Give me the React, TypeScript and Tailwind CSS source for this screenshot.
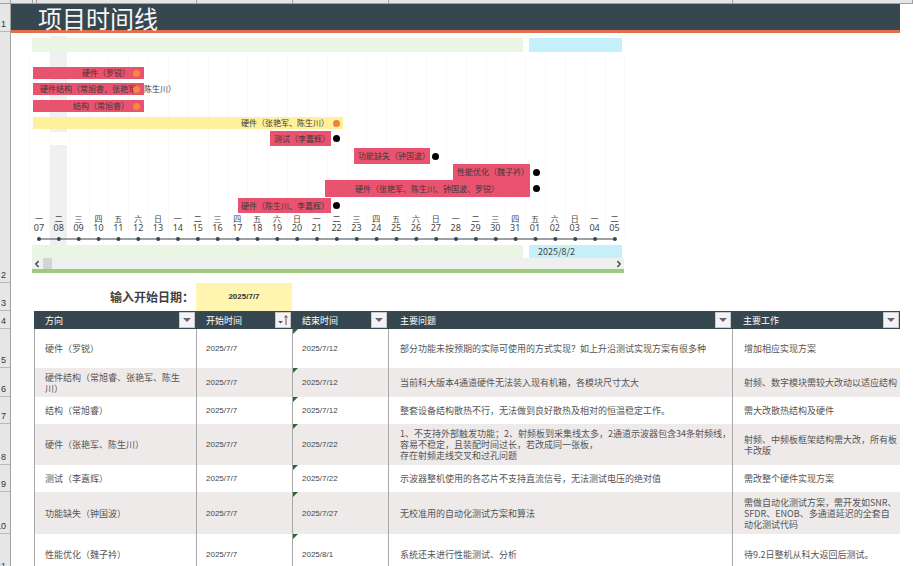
import { ChevronLeft, ChevronRight } from 'lucide-react'

const days = ['07', '08', '09', '10', '11', '12', '13', '14', '15', '16', '17', '18', '19', '20', '21', '22', '23', '24', '25', '26', '27', '28', '29', '30', '31', '01', '02', '03', '04', '05']
const weekdays = ['一', '二', '三', '四', '五', '六', '日']

const gutterRows = [
  { label: '1', cls: 'h-[28px]' },
  { label: '2', cls: 'h-[251px]' },
  { label: '3', cls: 'h-[28px]' },
  { label: '4', cls: 'h-[18px]' },
  { label: '5', cls: 'h-[39px]' },
  { label: '6', cls: 'h-[29px]' },
  { label: '7', cls: 'h-[27px]' },
  { label: '8', cls: 'h-[41px]' },
  { label: '9', cls: 'h-[27px]' },
  { label: '10', cls: 'h-[42px]' },
  { label: '11', cls: 'h-[40px]' },
]

const topTicks = ['w-[11px]', 'w-[22px]', 'w-[4px]', 'w-[160px]', 'w-[96px]', 'w-[96px]', 'w-[344px]', 'w-[180px]']

const bars = [
  { text: '硬件（罗锐）', row: 'mt-[15px] h-[12px] ml-[22px]', bar: 'w-[111px] bg-[#e9536f] justify-end pr-[14px]', dot: 'bg-[#f58a3c] ml-[-11px]' },
  { text: '硬件结构（常旭睿、张艳军、陈生川）', row: 'mt-[4px] h-[12px] ml-[22px]', bar: 'w-[111px] bg-[#e9536f] pl-[7px]', dot: 'bg-[#f58a3c] ml-[-11px]' },
  { text: '结构（常旭睿）', row: 'mt-[5px] h-[12px] ml-[22px]', bar: 'w-[111px] bg-[#e9536f] justify-end pr-[15px]', dot: 'bg-[#f58a3c] ml-[-11px]' },
  { text: '硬件（张艳军、陈生川）', row: 'mt-[5px] h-[12px] ml-[22px]', bar: 'w-[310px] bg-[#fff19b] justify-end pr-[14px]', dot: 'bg-[#f0803c] ml-[-10px]' },
  { text: '测试（李嘉辉）', row: 'mt-[2px] h-[15px] ml-[259px]', bar: 'w-[61px] bg-[#e9536f] justify-end pr-[1px]', dot: 'bg-black ml-[2px]' },
  { text: '功能缺失（钟国波）', row: 'mt-[2px] h-[16px] ml-[343px]', bar: 'w-[76px] bg-[#e9536f] justify-end pr-0', dot: 'bg-black ml-[2px]' },
  { text: '性能优化（魏子衿）', row: 'h-[16px] ml-[442px]', bar: 'w-[77px] bg-[#e9536f] justify-end pr-[1px]', dot: 'bg-black ml-[3px]' },
  { text: '硬件（张艳军、陈生川、钟国波、罗锐）', row: 'h-[17px] ml-[314px]', bar: 'w-[205px] bg-[#e9536f] justify-end pr-[31px]', dot: 'bg-black ml-[3px]' },
  { text: '硬件（陈生川、李嘉辉）', row: 'mt-[1px] h-[15px] ml-[227px]', bar: 'w-[93px] bg-[#e9536f] justify-end pr-[2px]', dot: 'bg-black ml-[2px]' },
]

const headers = [
  { text: '方向', pad: 'pl-[11px]' },
  { text: '开始时间', pad: 'pl-[10px]', sorted: true },
  { text: '结束时间', pad: 'pl-[10px]' },
  { text: '主要问题', pad: 'pl-[12px]' },
  { text: '主要工作', pad: 'pl-[11px]' },
]

const rows = [
  { h: 'h-[39px]', dir: '硬件（罗锐）', end: '2025/7/12', issue: '部分功能未按预期的实际可使用的方式实现？如上升沿测试实现方案有很多种', work: '增加相应实现方案' },
  { h: 'h-[29px] bg-[#eeeaea]', dir: '硬件结构（常旭睿、张艳军、陈生\n川）', end: '2025/7/12', issue: '当前科大版本4通道硬件无法装入现有机箱，各模块尺寸太大', work: '射频、数字模块需较大改动以适应结构' },
  { h: 'h-[27px]', dir: '结构（常旭睿）', end: '2025/7/12', issue: '整套设备结构散热不行，无法做到良好散热及相对的恒温稳定工作。', work: '需大改散热结构及硬件' },
  { h: 'h-[41px] bg-[#eeeaea]', dir: '硬件（张艳军、陈生川）', end: '2025/7/22', issue: '1、不支持外部触发功能；2、射频板到采集线太多，2通道示波器包含34条射频线，\n容易不稳定，且装配时间过长，若改成同一张板，\n存在射频走线交叉和过孔问题', work: '射频、中频板框架结构需大改，所有板\n卡改版' },
  { h: 'h-[27px]', dir: '测试（李嘉辉）', end: '2025/7/22', issue: '示波器整机使用的各芯片不支持直流信号，无法测试电压的绝对值', work: '需改整个硬件实现方案' },
  { h: 'h-[42px] bg-[#eeeaea]', dir: '功能缺失（钟国波）', end: '2025/7/27', issue: '无校准用的自动化测试方案和算法', work: '需做自动化测试方案，需开发如SNR、\nSFDR、ENOB、多通道延迟的全套自\n动化测试代码' },
  { h: 'h-[40px]', dir: '性能优化（魏子衿）', end: '2025/8/1', issue: '系统还未进行性能测试、分析', work: '待9.2日整机从科大返回后测试。' },
]

function FilterButton({ sorted }: { sorted?: boolean }) {
  return (
    <div className="w-[16px] h-[16px] bg-[#f3f3f7] border border-[#c8c8c8] flex items-center justify-center shrink-0">
      <svg width="12" height="12" viewBox="0 0 12 12">
        {sorted ? (
          <>
            <path d="M1 7h5l-2.5 2.5z" fill="#555" />
            <path d="M9 11V2M7.5 3.5L9 1.5l1.5 2" stroke="#555" strokeWidth="1" fill="none" />
          </>
        ) : (
          <path d="M2 4h8L6 8z" fill="#666" />
        )}
      </svg>
    </div>
  )
}

function Timeline() {
  return (
    <div className="relative w-[625px]">
      <div className="absolute left-[39px] top-[3px] w-[17px] h-[96px] bg-[#f0f0f0]" />
      <div className="absolute left-[39px] top-[112px] w-[17px] h-[100px] bg-[#f0f0f0]" />
      <div className="absolute left-[18px] top-[24px] w-[596px] h-[180px] bg-[repeating-linear-gradient(90deg,#f8f8f8_0,#f8f8f8_1px,transparent_1px,transparent_19.85px)]" />

      <div className="relative flex pt-[5px] ml-[21px]">
        <div className="w-[491px] h-[14px] bg-[#ebf5e3]" />
        <div className="w-[93px] h-[14px] ml-[6px] bg-[#c5f0fa]" />
      </div>

      {bars.map((b) => (
        <div key={b.text} className={`relative flex items-center ${b.row}`}>
          <div className={`h-full flex items-center whitespace-nowrap text-[8px] text-[#3a3a3a] ${b.bar}`}>{b.text}</div>
          <div className={`relative w-[7px] h-[7px] rounded-full shrink-0 ${b.dot}`} />
        </div>
      ))}

      <div className="relative flex ml-[18px] mt-[1px] text-[#444] text-center">
        {days.map((d, i) => (
          <div key={i} className="w-[19.85px] shrink-0">
            <div className="text-[8px] leading-[9px]">{weekdays[i % 7]}</div>
            <div className="text-[9px] leading-[9px] font-['Noto_Sans','Noto_Sans_CJK_SC',sans-serif]">{d}</div>
          </div>
        ))}
      </div>

      <svg className="relative block ml-[18px] mt-[4px]" width="600" height="6" viewBox="0 0 600 6">
        <line x1="10" y1="3" x2="586" y2="3" stroke="#37474f" strokeWidth="1" />
        {days.map((d, i) => (
          <circle key={i} cx={10 + i * 19.86} cy="3" r="2" fill="#37474f" />
        ))}
      </svg>

      <div className="relative flex mt-[3px] ml-[21px]">
        <div className="w-[491px] h-[13px] bg-[#ebf5e3]" />
        <div className="w-[93px] h-[13px] ml-[6px] bg-[#c5f0fa] text-[9px] text-[#444] flex items-center pl-[9px]">2025/8/2</div>
      </div>

      <div className="relative ml-[21px] w-[592px] h-[11px] bg-[#f0f0f0] flex items-center justify-between">
        <div className="flex items-center">
          <ChevronLeft size={10} strokeWidth={3.5} className="text-[#444]" />
          <div className="w-[9px] h-[11px] bg-[#d4d4d4] ml-[1px]" />
        </div>
        <ChevronRight size={10} strokeWidth={3.5} className="text-[#444]" />
      </div>
      <div className="ml-[21px] w-[592px] h-[4px] bg-[#9ccb7b]" />
    </div>
  )
}

export default function App() {
  return (
    <div className="w-[913px] h-[566px] overflow-hidden bg-white font-['Noto_Sans_CJK_SC','Liberation_Sans',sans-serif]">
      <div className="flex h-[4px] bg-[#e6e6e6] border-b border-[#a0a0a0]">
        {topTicks.map((w, i) => (
          <div key={i} className={`${w} border-r border-[#a0a0a0]`} />
        ))}
      </div>

      <div className="flex">
        <div className="w-[11px] shrink-0 bg-[#e6e6e6] border-r border-[#a0a0a0] overflow-hidden">
          {gutterRows.map((r) => (
            <div key={r.label} className={`${r.cls} flex items-end justify-end pr-[4px] pb-[2px] border-b border-[#b8b8b8] text-[9px] leading-[10px] text-[#333] font-['Liberation_Sans',sans-serif]`}>
              {r.label}
            </div>
          ))}
        </div>

        <div className="flex-1 min-w-0">
          <div className="w-[889px] h-[29px] bg-[#37474f] border-b-[3px] border-[#e0704a] pl-[27px] pt-[2px] text-[24px] leading-[24px] text-[#f5f5f5]">
            项目时间线
          </div>

          <Timeline />

          <div className="flex items-center h-[28px] mt-[10px]">
            <div className="w-[183px] mr-[2px] text-right text-[12px] font-bold text-[#404040]">输入开始日期：</div>
            <div className="w-[96px] h-full bg-[#fff5b0] flex items-center justify-center text-[8px] font-bold text-[#333] font-['Liberation_Sans',sans-serif]">2025/7/7</div>
          </div>

          <div className="ml-[23px] w-[866px] text-[9px] leading-[11px] text-[#555]">
            <div className="grid grid-cols-[162px_96px_96px_344px_168px] h-[18px] bg-[#37474f] text-white">
              {headers.map((h) => (
                <div key={h.text} className={`flex items-center justify-between pr-[1px] ${h.pad}`}>
                  <span>{h.text}</span>
                  <FilterButton sorted={h.sorted} />
                </div>
              ))}
            </div>

            {rows.map((r) => (
              <div key={r.dir} className={`grid grid-cols-[162px_96px_96px_344px_168px] items-stretch border-l border-[#a8a8a8] ${r.h}`}>
                <div className="flex items-center pl-[10px] pr-[6px] whitespace-pre-line border-r border-[#a8a8a8]">{r.dir}</div>
                <div className="flex items-center pl-[9px] text-[8px] text-[#444] border-r border-[#a8a8a8] font-['Liberation_Sans',sans-serif]">2025/7/7</div>
                <div className="relative flex items-center pl-[9px] text-[8px] text-[#444] border-r border-[#a8a8a8] font-['Liberation_Sans',sans-serif]">
                  <div className="absolute left-0 top-0 w-0 h-0 border-t-[5px] border-t-[#1f6b3a] border-r-[5px] border-r-transparent" />
                  {r.end}
                </div>
                <div className="flex items-center pl-[11px] whitespace-pre-line border-r border-[#a8a8a8]">{r.issue}</div>
                <div className="flex items-center pl-[11px] whitespace-pre-line">{r.work}</div>
              </div>
            ))}
          </div>
        </div>
      </div>
    </div>
  )
}
